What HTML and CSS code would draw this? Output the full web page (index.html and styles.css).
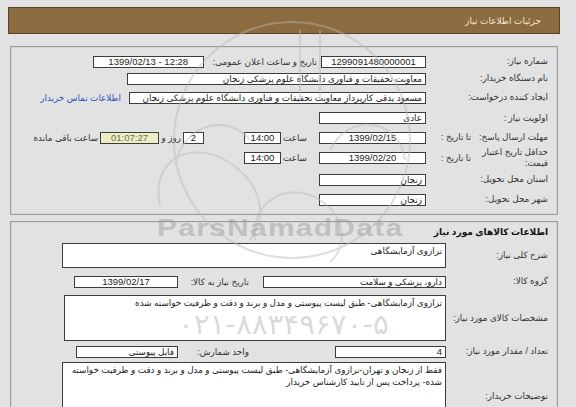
FILE: index.html
```html
<!DOCTYPE html>
<html lang="fa" dir="rtl">
<head>
<meta charset="utf-8">
<title>جزئیات اطلاعات نیاز</title>
<link rel="stylesheet" href="styles.css">
</head>
<body>
<div class="page">
  <div class="header"><span>جزئیات اطلاعات نیاز</span></div>

  <div class="panel p1">
    <div class="lbl">شماره نیاز:</div>
    <div class="cells">
      <div class="box c w105">1299091480000001</div>
      <span class="txt t-pub">تاریخ و ساعت اعلان عمومی:</span>
      <div class="box c w111" dir="ltr">1399/02/13 - 12:28</div>
    </div>

    <div class="lbl">نام دستگاه خریدار:</div>
    <div class="cells">
      <div class="box w299">معاونت تحقیقات و فناوری دانشگاه علوم پزشکی زنجان</div>
    </div>

    <div class="lbl">ایجاد کننده درخواست:</div>
    <div class="cells">
      <div class="box w297">مسعود یدقی کارپرداز معاونت تحقیقات و فناوری دانشگاه علوم پزشکی زنجان</div>
      <a class="link" href="#">اطلاعات تماس خریدار</a>
    </div>

    <div class="lbl">اولویت نیاز :</div>
    <div class="cells">
      <div class="box w107">عادی</div>
    </div>

    <div class="lbl split"><span>مهلت ارسال پاسخ:</span><span>تا تاریخ :</span></div>
    <div class="cells">
      <div class="box c w107">1399/02/15</div>
      <span class="txt t-hour">ساعت</span>
      <div class="box c w37">14:00</div>
      <div class="box c w21 days">2</div>
      <span class="txt t-day">روز و</span>
      <div class="box c w59 remain">01:07:27</div>
      <span class="txt t-rem">ساعت باقی مانده</span>
    </div>

    <div class="lbl split"><span class="two">حداقل تاریخ اعتبار<br>قیمت:</span><span>تا تاریخ :</span></div>
    <div class="cells">
      <div class="box c w107">1399/02/20</div>
      <span class="txt t-hour">ساعت</span>
      <div class="box c w37">14:00</div>
    </div>

    <div class="lbl">استان محل تحویل:</div>
    <div class="cells">
      <div class="box w107">زنجان</div>
    </div>

    <div class="lbl">شهر محل تحویل:</div>
    <div class="cells">
      <div class="box w107">زنجان</div>
    </div>
  </div>

  <div class="panel p2">
    <div class="title">اطلاعات کالاهای مورد نیاز</div>

    <div class="lbl">شرح کلی نیاز:</div>
    <div class="cells">
      <div class="box area w384 h25">ترازوی آزمایشگاهی</div>
    </div>

    <div class="lbl">گروه کالا:</div>
    <div class="cells">
      <div class="part-a"><div class="box w183">دارو، پزشکی و سلامت</div></div>
      <span class="sublbl">تاریخ نیاز به کالا:</span>
      <div class="box c w104">1399/02/17</div>
    </div>

    <div class="lbl">مشخصات کالای مورد نیاز:</div>
    <div class="cells">
      <div class="box area w382 h46">ترازوی آزمایشگاهی- طبق لیست پیوستی و مدل و برند و دقت و ظرفیت خواسته شده</div>
    </div>

    <div class="lbl">تعداد / مقدار مورد نیاز:</div>
    <div class="cells">
      <div class="part-a"><div class="box num w111">4</div></div>
      <span class="sublbl">واحد شمارش:</span>
      <div class="box w102">فایل پیوستی</div>
    </div>

    <div class="lbl">توضیحات خریدار:</div>
    <div class="cells top">
      <div class="box area w384 h55">فقط از زنجان و تهران-ترازوی آزمایشگاهی- طبق لیست پیوستی و مدل و برند و دقت و ظرفیت خواسته شده- پرداخت پس از تایید کارشناس خریدار</div>
    </div>
  </div>

  <div class="wm" aria-hidden="true">
    <svg class="wm-logo" width="576" height="407" viewBox="0 0 576 407">
      <g fill="none" stroke="#b9b9b9" stroke-width="2">
        <circle cx="292" cy="140" r="118"/>
        <path d="M160 205 C150 160 190 140 225 160 C260 180 270 215 250 240"/>
        <path d="M255 240 C250 200 290 180 320 200 C350 220 345 250 330 262"/>
        <path d="M175 165 C185 120 230 115 250 140"/>
        <path d="M330 150 C350 110 400 120 405 160"/>
        <path d="M300 30 L300 100 M320 30 L320 100"/>
      </g>
    </svg>
    <div class="wm-brand">ParsNamadData</div>
    <div class="wm-phone">۰۲۱-۸۸۳۴۹۶۷۰-۵</div>
  </div>
</div>
</body>
</html>
```

FILE: styles.css
```css
html, body {
  margin: 0;
  padding: 0;
  background: #e2e2e2;
}
body {
  font-family: "Liberation Sans", "DejaVu Sans", sans-serif;
  font-size: 8.8px;
  color: #222;
  width: 576px;
  height: 407px;
  overflow: hidden;
}
.page {
  position: relative;
  width: 576px;
  height: 407px;
  padding-top: 7px;
  box-sizing: border-box;
  overflow: hidden;
}
.header {
  margin: 0 16px 0 8px;
  height: 25px;
  background: #8b6b3f;
  border: 1px solid #5a4427;
  color: #f2e9d6;
  display: flex;
  align-items: center;
  padding-right: 18px;
  font-size: 9px;
}
.panel {
  margin: 12px 18px 0 10px;
  border: 1px solid #9c9c9c;
  box-shadow: inset 0 0 0 1px #d6d6d6;
  display: grid;
  column-gap: 5px;
  padding-right: 9px;
  align-items: center;
}
.p1 {
  grid-template-columns: 117px 1fr;
  grid-template-rows: 17px 17px 21px 20px 19px 22px 21px 19px;
  padding-top: 6px;
  padding-bottom: 5px;
}
.p2 {
  margin-top: 6px;
  grid-template-columns: 97px 1fr;
  grid-template-rows: 20px 27px 25px 48px 19px 70px;
}
.title {
  grid-column: 1 / -1;
  font-weight: bold;
  font-size: 9px;
  color: #111;
}
.lbl {
  color: #333;
  white-space: nowrap;
  line-height: 11px;
}
.lbl.split {
  display: flex;
  justify-content: space-between;
  align-items: center;
  padding-left: 10px;
}
.cells {
  display: flex;
  align-items: center;
  height: 100%;
}
.cells.top {
  align-items: flex-start;
  padding-top: 1px;
}
.box {
  box-sizing: border-box;
  height: 12px;
  line-height: 10px;
  background: #fff;
  border: 1px solid #3c3c3c;
  padding: 0 3px;
  white-space: nowrap;
  overflow: hidden;
  flex: none;
  color: #222;
}
.box.c {
  text-align: center;
  font-size: 9.5px;
}
.box.num { font-size: 9.5px; }
.box.area {
  white-space: normal;
  line-height: 12px;
  padding: 1px 3px;
}
.h25 { height: 25px; }
.h46 { height: 46px; }
.h55 { height: 55px; }
.w21 { width: 21px; }
.w37 { width: 37px; }
.w59 { width: 59px; }
.w102 { width: 102px; }
.w104 { width: 104px; }
.w105 { width: 105px; }
.w107 { width: 107px; }
.w111 { width: 111px; }
.w183 { width: 183px; }
.w297 { width: 297px; }
.w299 { width: 299px; }
.w382 { width: 382px; }
.w384 { width: 384px; }
.txt {
  white-space: nowrap;
  color: #333;
}
.t-pub { margin: 0 4px 0 9px; }
.t-hour { margin: 0 12px 0 8px; width: 18px; }
.days { margin-right: 40px; }
.t-day { margin: 0 2px; width: 20px; }
.remain {
  background: #eeeec6;
  color: #6e6e48;
}
.t-rem { margin-right: 2px; }
.link {
  margin-right: 8px;
  color: #2d4fbf;
  text-decoration: none;
  white-space: nowrap;
}
.part-a {
  width: 197px;
  flex: none;
}
.sublbl {
  width: 67px;
  flex: none;
  margin-left: 4px;
  white-space: nowrap;
  color: #333;
}
.wm {
  position: absolute;
  inset: 0;
  pointer-events: none;
}
.wm-logo {
  position: absolute;
  left: 0;
  top: 0;
  opacity: 0.45;
}
.wm-brand {
  position: absolute;
  left: 157px;
  top: 216px;
  font-family: "Liberation Sans", sans-serif;
  font-weight: bold;
  font-size: 24px;
  line-height: 24px;
  letter-spacing: 1px;
  color: rgba(150, 150, 150, 0.45);
  direction: ltr;
  transform-origin: left top;
  transform: scaleX(1.25);
}
.wm-phone {
  position: absolute;
  left: 178px;
  top: 311px;
  font-family: "DejaVu Sans", sans-serif;
  font-size: 28px;
  line-height: 28px;
  direction: ltr;
  color: rgba(150, 150, 150, 0.35);
  transform-origin: left top;
  transform: scaleX(1.05);
}
```
